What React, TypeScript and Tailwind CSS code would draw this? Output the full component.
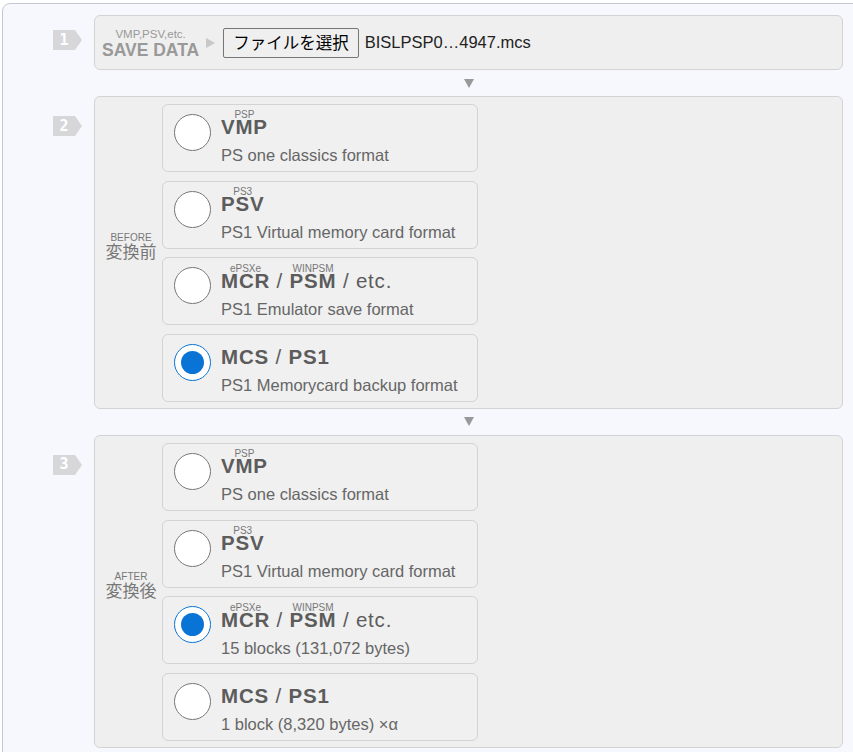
import React from 'react'

type Part = { text: string; label?: string; bold?: boolean }

type Option = {
  parts: Part[]
  desc: string
  checked?: boolean
}

const vmp: Part[] = [{ text: 'VMP', label: 'PSP', bold: true }]
const psv: Part[] = [{ text: 'PSV', label: 'PS3', bold: true }]
const mcr: Part[] = [
  { text: 'MCR', label: 'ePSXe', bold: true },
  { text: ' / ' },
  { text: 'PSM', label: 'WINPSM', bold: true },
  { text: ' / etc.' },
]
const mcs: Part[] = [
  { text: 'MCS', bold: true },
  { text: ' / ' },
  { text: 'PS1', bold: true },
]

const before: Option[] = [
  { parts: vmp, desc: 'PS one classics format' },
  { parts: psv, desc: 'PS1 Virtual memory card format' },
  { parts: mcr, desc: 'PS1 Emulator save format' },
  { parts: mcs, desc: 'PS1 Memorycard backup format', checked: true },
]

const after: Option[] = [
  { parts: vmp, desc: 'PS one classics format' },
  { parts: psv, desc: 'PS1 Virtual memory card format' },
  { parts: mcr, desc: '15 blocks (131,072 bytes)', checked: true },
  { parts: mcs, desc: '1 block (8,320 bytes) ×α' },
]

function StepBadge({ n }: { n: number }) {
  return (
    <div className="relative h-[20px] w-[29px]">
      <svg width="29" height="20" viewBox="0 0 29 20" className="block">
        <polygon points="0,0 22,0 29,10 22,20 0,20" fill="#d7d7da" />
      </svg>
      <span className="absolute left-0 top-0 flex h-[20px] w-[22px] items-center justify-center font-['DejaVu_Sans_Mono',monospace] text-[15px] font-bold leading-none text-white">
        {n}
      </span>
    </div>
  )
}

function Radio({ checked }: { checked?: boolean }) {
  if (checked) {
    return (
      <span className="mt-[9px] flex h-[37px] w-[37px] shrink-0 items-center justify-center rounded-full border-[1.5px] border-[#0a74d6] bg-white">
        <span className="h-[23px] w-[23px] rounded-full bg-[#0a74d6]" />
      </span>
    )
  }
  return <span className="mt-[9px] h-[37px] w-[37px] shrink-0 rounded-full border-[1.5px] border-[#777] bg-white" />
}

function Title({ parts }: { parts: Part[] }) {
  return (
    <div className="flex items-end text-[20.5px] tracking-[0.8px] text-[#5c5c5c]">
      {parts.map((p, i) =>
        p.bold ? (
          <span key={i} className="inline-flex flex-col items-center">
            <span className="h-[7px] whitespace-nowrap text-[10px] leading-[7px] tracking-normal text-[#777]">
              {p.label ?? ''}
            </span>
            <span className="font-bold leading-[18px]">{p.text}</span>
          </span>
        ) : (
          <span key={i} className="whitespace-pre leading-[18px]">
            {p.text}
          </span>
        )
      )}
    </div>
  )
}

function FormatOption({ opt }: { opt: Option }) {
  return (
    <div className="flex h-[68px] w-[316px] items-start rounded-[6px] border border-[#d3d3d3] bg-[#f0f0f0] pl-[11px]">
      <Radio checked={opt.checked} />
      <div className="ml-[10px] mt-[6.3px] flex flex-col">
        <Title parts={opt.parts} />
        <div className="mt-[9px] text-[16.5px] leading-[20px] text-[#666]">{opt.desc}</div>
      </div>
    </div>
  )
}

function FormatBox({ en, ja, options }: { en: string; ja: string; options: Option[] }) {
  return (
    <div className="flex w-[749px] rounded-[6px] border border-[#d3d3d3] bg-[#efefef] pb-[6px] pt-[7px]">
      <div className="mb-[10px] flex w-[67px] flex-col items-center self-center pl-[5px] text-[#777]">
        <span className="text-[10px] leading-[10px]">{en}</span>
        <span className="text-[17px] leading-[19px]">{ja}</span>
      </div>
      <div className="flex flex-col gap-[8.67px]">
        {options.map((o, i) => (
          <FormatOption key={i} opt={o} />
        ))}
      </div>
    </div>
  )
}

function DownArrow() {
  return (
    <div className="flex h-[26px] w-[749px] items-center justify-center">
      <svg width="10" height="9" viewBox="0 0 10 9">
        <polygon points="0,0 10,0 5,9" fill="#999" />
      </svg>
    </div>
  )
}

export default function App() {
  return (
    <div className="h-[752px] w-[853px] overflow-hidden bg-white font-['Liberation_Sans',Arial,'Noto_Sans_CJK_JP',sans-serif]">
      <div className="ml-[2px] mt-[3px] w-[900px] rounded-lg border border-[#c4c8d4] bg-[#f7f8fd] pb-[20px] pl-[50px] pt-[11px]">
        {/* step 1: pick the save file */}
        <div className="flex items-start">
          <div className="w-[41px] pt-[15px]">
            <StepBadge n={1} />
          </div>
          <div className="flex h-[55px] w-[749px] items-center rounded-[6px] border border-[#d3d3d3] bg-[#efefef] pl-[7px]">
            <div className="mt-[2px] flex flex-col items-center text-[#999]">
              <span className="text-[11.5px] leading-[12px]">VMP,PSV,etc.</span>
              <span className="text-[17.5px] font-bold leading-[20px]">SAVE DATA</span>
            </div>
            <svg width="9" height="10" viewBox="0 0 9 10" className="ml-[7px]">
              <polygon points="0,0 9,5 0,10" fill="#c8c8c8" />
            </svg>
            <button className="ml-[8px] flex h-[30px] items-center rounded-[2px] border border-[#767676] bg-[#efefef] px-[9px] font-['Noto_Sans_CJK_JP',sans-serif] text-[16.5px] text-black">
              ファイルを選択
            </button>
            <span className="ml-[6px] text-[16.5px] text-[#222]">BISLPSP0…4947.mcs</span>
          </div>
        </div>

        <div className="pl-[41px]">
          <DownArrow />
        </div>

        {/* step 2: source format */}
        <div className="flex items-start">
          <div className="w-[41px] pt-[20px]">
            <StepBadge n={2} />
          </div>
          <FormatBox en="BEFORE" ja="変換前" options={before} />
        </div>

        <div className="pl-[41px]">
          <DownArrow />
        </div>

        {/* step 3: target format */}
        <div className="flex items-start">
          <div className="w-[41px] pt-[20px]">
            <StepBadge n={3} />
          </div>
          <FormatBox en="AFTER" ja="変換後" options={after} />
        </div>
      </div>
    </div>
  )
}
